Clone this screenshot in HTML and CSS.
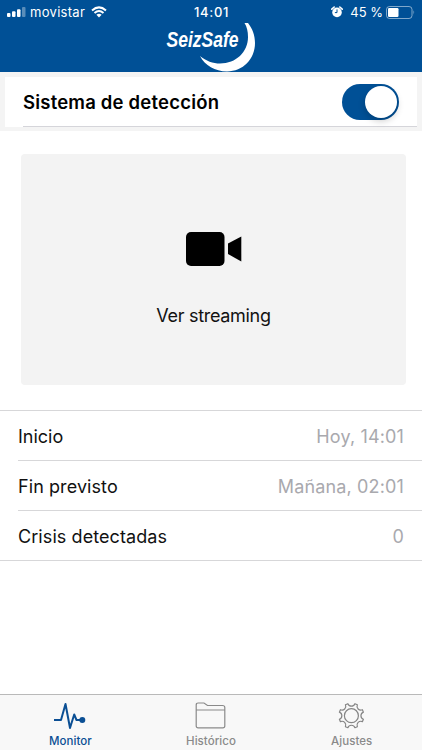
FILE: index.html
```html
<!DOCTYPE html>
<html lang="es">
<head>
<meta charset="utf-8">
<title>SeizSafe</title>
<link rel="stylesheet" href="styles.css">
</head>
<body>
<div class="app">
  <header class="header">
    <div class="status">
      <div class="status-left">
        <svg class="signal" width="19" height="10" viewBox="0 0 19 10"><rect x="0" y="6" width="3.5" height="4" rx="1"/><rect x="5" y="4.2" width="3.5" height="5.8" rx="1"/><rect x="10" y="2.2" width="3.5" height="7.8" rx="1"/><rect x="15" y="0" width="3.5" height="10" rx="1" opacity=".35"/></svg>
        <span class="carrier">movistar</span>
        <svg class="wifi" width="16" height="12" viewBox="0 0 16 12" fill="none" stroke="#fff" stroke-width="2"><path d="M1 4.4Q8-1.7 15 4.4M3.5 7Q8 3.1 12.5 7"/><path d="M5.4 8.8Q8 6.7 10.6 8.8L8 11.5Z" fill="#fff" stroke="none"/></svg>
      </div>
      <span class="clock">14:01</span>
      <div class="status-right">
        <svg class="alarm" width="12" height="12" viewBox="0 0 12 12"><circle cx="6" cy="6.4" r="4.8" fill="#fff"/><path d="M.8 3.2 3.2 1M11.2 3.2 8.8 1" stroke="#fff" stroke-width="1.6" stroke-linecap="round"/><path d="M6 3.4V6.6H3.9" fill="none" stroke="#005096" stroke-width="1"/></svg>
        <span class="percent">45 %</span>
        <svg class="battery" width="30" height="13" viewBox="0 0 30 13"><rect x=".5" y=".5" width="25.5" height="12" rx="3" fill="none" stroke="#fff" stroke-opacity=".5"/><rect x="2" y="2" width="10.5" height="9" rx="1.2" fill="#fff"/><path d="M27.5 4.3Q29.2 6.5 27.5 8.7Z" fill="#fff" opacity=".55"/></svg>
      </div>
    </div>
    <svg class="logo" width="92" height="52" viewBox="165 21 92 52">
      <text x="166.5" y="47.2" textLength="72" lengthAdjust="spacingAndGlyphs">SeizSafe</text>
      <path d="M244.500 23H248C252.500 28.500 255 35.500 255 43C255 59 243 71.400 227 71.400C215 71.400 205 65.500 200 56C206 61 213 63.500 220 63.500C236 63.500 248 52 248 37C248 31.500 247 27 244.500 23Z"/>
    </svg>
  </header>
  <section class="detection">
    <div class="detection-card">
      <div class="detection-row">
        <h1 class="detection-title">Sistema de detección</h1>
        <div class="toggle"><div class="knob"></div></div>
      </div>
    </div>
  </section>
  <main class="content">
    <div class="stream">
      <svg class="camera" width="56" height="34" viewBox="0 0 56 34"><rect width="38.500" height="34" rx="5"/><path d="M42 11.500 55.300 4.500V29.500L42 22Z"/></svg>
      <span class="stream-label">Ver streaming</span>
    </div>
    <div class="list">
      <div class="row"><span class="l1">Inicio</span><span class="value v1">Hoy, 14:01</span></div>
      <div class="row"><span class="l2">Fin previsto</span><span class="value v2">Mañana, 02:01</span></div>
      <div class="row"><span class="l3">Crisis detectadas</span><span class="value">0</span></div>
    </div>
  </main>
  <nav class="tabs">
    <div class="tab active">
      <svg width="34" height="30" viewBox="0 0 34 30" fill="none" stroke="#0b4f94" stroke-width="2" stroke-linejoin="round"><path d="M1 19H8L12.500 3 17 27 21.200 13.500 23.500 19H29"/><circle cx="29.300" cy="19" r="3" fill="#0b4f94" stroke="none"/></svg>
      <span class="tab-label">Monitor</span>
    </div>
    <div class="tab">
      <svg width="34" height="30" viewBox="0 0 34 30" fill="none" stroke="#8a8a8a" stroke-width="1.200"><path d="M2.200 25V4Q2.200 2 4.200 2H10L13.500 4.500H28.500Q30.800 4.500 30.800 6.500V25Q30.800 26.800 28.800 26.800H4.200Q2.200 26.800 2.200 25ZM2.200 9H30.800"/></svg>
      <span class="tab-label">Histórico</span>
    </div>
    <div class="tab">
      <svg width="34" height="30" viewBox="-16.400 -14.700 34 30" fill="none" stroke="#858585" stroke-width="1.200" stroke-linejoin="round"><path d="M11.990-3.550A3.800 3.800 0 0 0 11.990 3.550L10.990 5.960A3.800 3.800 0 0 0 5.960 10.990L3.550 11.990A3.800 3.800 0 0 0-3.550 11.990L-5.960 10.990A3.800 3.800 0 0 0-10.990 5.960L-11.990 3.550A3.800 3.800 0 0 0-11.990-3.550L-10.990-5.960A3.800 3.800 0 0 0-5.960-10.990L-3.550-11.990A3.800 3.800 0 0 0 3.550-11.990L5.960-10.990A3.800 3.800 0 0 0 10.990-5.960Z"/><circle r="7"/></svg>
      <span class="tab-label">Ajustes</span>
    </div>
  </nav>
</div>
</body>
</html>
```
FILE: styles.css
```css
* { box-sizing: border-box; }
body { margin: 0; background: #fff; font-family: Inter, "Liberation Sans", sans-serif; color: #111; }
.app { width: 422px; height: 750px; display: flex; flex-direction: column; overflow: hidden; }
.header { height: 72px; flex: none; background: #005096; color: #fff; display: flex; flex-direction: column; align-items: center; }
.status { width: 100%; height: 21px; padding: 3px 7px 0; display: grid; grid-template-columns: 1fr auto 1fr; align-items: center; font-size: 13px; line-height: 18px; flex: none; }
.status-left, .status-right { display: flex; align-items: center; }
.signal { fill: #fff; margin-right: 4px; }
.carrier { letter-spacing: .3px; margin-right: 6px; }
.clock { font-weight: 500; letter-spacing: .7px; padding-left: 1px; }
.status-right { justify-content: flex-end; }
.percent { margin: 0 3px 0 7px; letter-spacing: 0; }
.battery { margin-right: -1px; }
.logo { flex: none; }
.logo text { font: italic bold 22px "Liberation Sans Narrow", "Liberation Sans", sans-serif; fill: #fff; }
.logo path { fill: #fff; }
.detection { height: 59px; flex: none; padding: 5px 5px 4px; background: #f4f4f4; }
.detection-card { height: 50px; background: #fff; padding-left: 18px; }
.detection-row { height: 50px; display: flex; align-items: center; justify-content: space-between; padding-right: 18px; border-bottom: 1px solid #d5d5da; }
.detection-title { margin: 0; font-size: 18.5px; font-weight: 600; letter-spacing: .2px; color: #000; }
.toggle { width: 57px; height: 36px; border-radius: 18px; background: #005096; display: flex; justify-content: flex-end; padding: 2px; }
.knob { width: 32px; height: 32px; border-radius: 50%; background: #fff; box-shadow: 0 3px 7px rgba(0,0,0,.2); }
.content { flex: 1; padding-top: 23px; }
.stream { height: 231px; width: 385px; margin-left: 21px; border-radius: 4px; background: #f3f3f3; display: flex; flex-direction: column; align-items: center; padding-top: 78px; }
.stream-label { margin-top: 38px; font-size: 18px; line-height: 24px; letter-spacing: -.3px; }
.list { margin-top: 25px; border-top: 1px solid #d7d7d9; border-bottom: 1px solid #d7d7d9; }
.row { height: 50px; margin-left: 18px; padding: 1px 18px 0 0; display: flex; align-items: center; justify-content: space-between; font-size: 18px; border-bottom: 1px solid #d7d7d9; }
.row:last-child { height: 49px; border-bottom: 0; }
.l2, .l3 { letter-spacing: .08px; }
.value { color: #a9a9ae; letter-spacing: .15px; }
.tabs { height: 56px; flex: none; display: grid; grid-template-columns: repeat(3, 1fr); border-top: 1px solid #b9b9b9; background: #f8f8f8; }
.tab { display: flex; flex-direction: column; align-items: center; padding-top: 6px; color: #8a8a8a; }
.tab-label { font-size: 11.5px; line-height: 16px; margin-top: 2px; font-weight: 500; letter-spacing: .05px; }
.active { color: #0b4f94; }
```
